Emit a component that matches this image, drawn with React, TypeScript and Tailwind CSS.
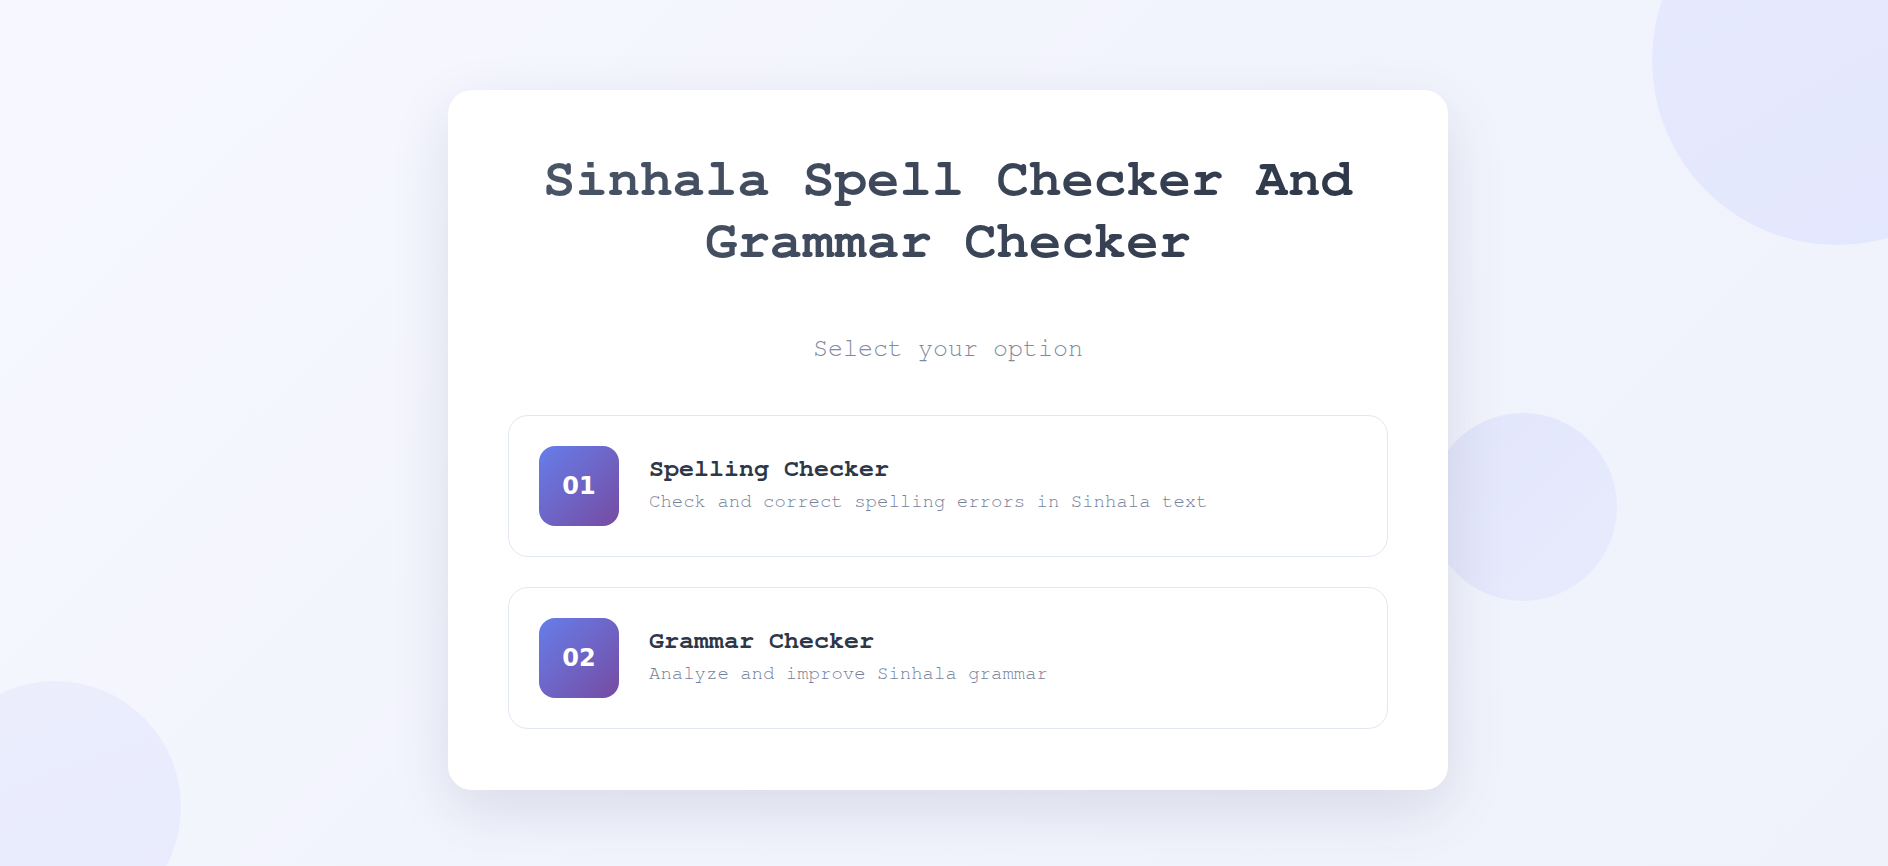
const options = [
    { num: '01', title: 'Spelling Checker', text: 'Check and correct spelling errors in Sinhala text' },
    { num: '02', title: 'Grammar Checker', text: 'Analyze and improve Sinhala grammar' },
];

export default function App() {
    return (
        <main className="relative min-h-screen w-full overflow-hidden bg-[linear-gradient(135deg,#f7f8ff_0%,#f2f4fd_50%,#f0f2fb_100%)] font-['Nimbus_Mono_PS','FreeMono','Courier_New','Courier','Liberation_Mono',monospace]">
            {/* floating circles */}
            <div className="absolute left-[1652px] top-[-125px] h-[370px] w-[370px] rounded-full bg-[linear-gradient(150deg,#e7eafd_0%,#e3e7fd_100%)]" />
            <div className="absolute left-[1429px] top-[413px] h-[188px] w-[188px] rounded-full bg-[linear-gradient(135deg,#e2e6fb_0%,#e8ebfd_100%)]" />
            <div className="absolute left-[-71px] top-[681px] h-[252px] w-[252px] rounded-full bg-[linear-gradient(160deg,#eceefd_0%,#e8ebfd_100%)]" />

            <div className="relative flex justify-center pl-2 pt-[90px]">
                <section className="w-[1000px] rounded-[24px] bg-white px-[60px] pb-[61px] pt-[58px] shadow-[0_20px_60px_rgba(30,40,80,0.12)]">
                    <h1 className="mb-[58px] bg-[linear-gradient(90deg,#4a5568,#2d3748)] bg-clip-text text-center text-[54px] font-bold leading-[62px] text-transparent">
                        Sinhala Spell Checker And
                        <br />
                        Grammar Checker
                    </h1>
                    <p className="mb-[48px] text-center text-[25px] leading-[37px] text-[#7f8aa0]">Select your option</p>

                    <div className="flex flex-col gap-[30px]">
                        {options.map((o) => (
                            <button
                                key={o.num}
                                type="button"
                                className="flex items-center gap-[30px] rounded-[20px] border border-[#e2e8f0] bg-white px-[30px] py-[30px] text-left"
                            >
                                <div className="flex h-[80px] w-[80px] shrink-0 items-center justify-center rounded-[16px] bg-[linear-gradient(135deg,#667eea_0%,#764ba2_100%)] font-['DejaVu_Sans',sans-serif] text-[24px] font-bold text-white">
                                    {o.num}
                                </div>
                                <div className="flex flex-col pb-[4px]">
                                    <h2 className="mb-[3px] text-[25px] font-bold leading-[32px] text-[#2d3748]">{o.title}</h2>
                                    <p className="text-[19px] leading-[28px] text-[#76829a]">{o.text}</p>
                                </div>
                            </button>
                        ))}
                    </div>
                </section>
            </div>
        </main>
    );
}
